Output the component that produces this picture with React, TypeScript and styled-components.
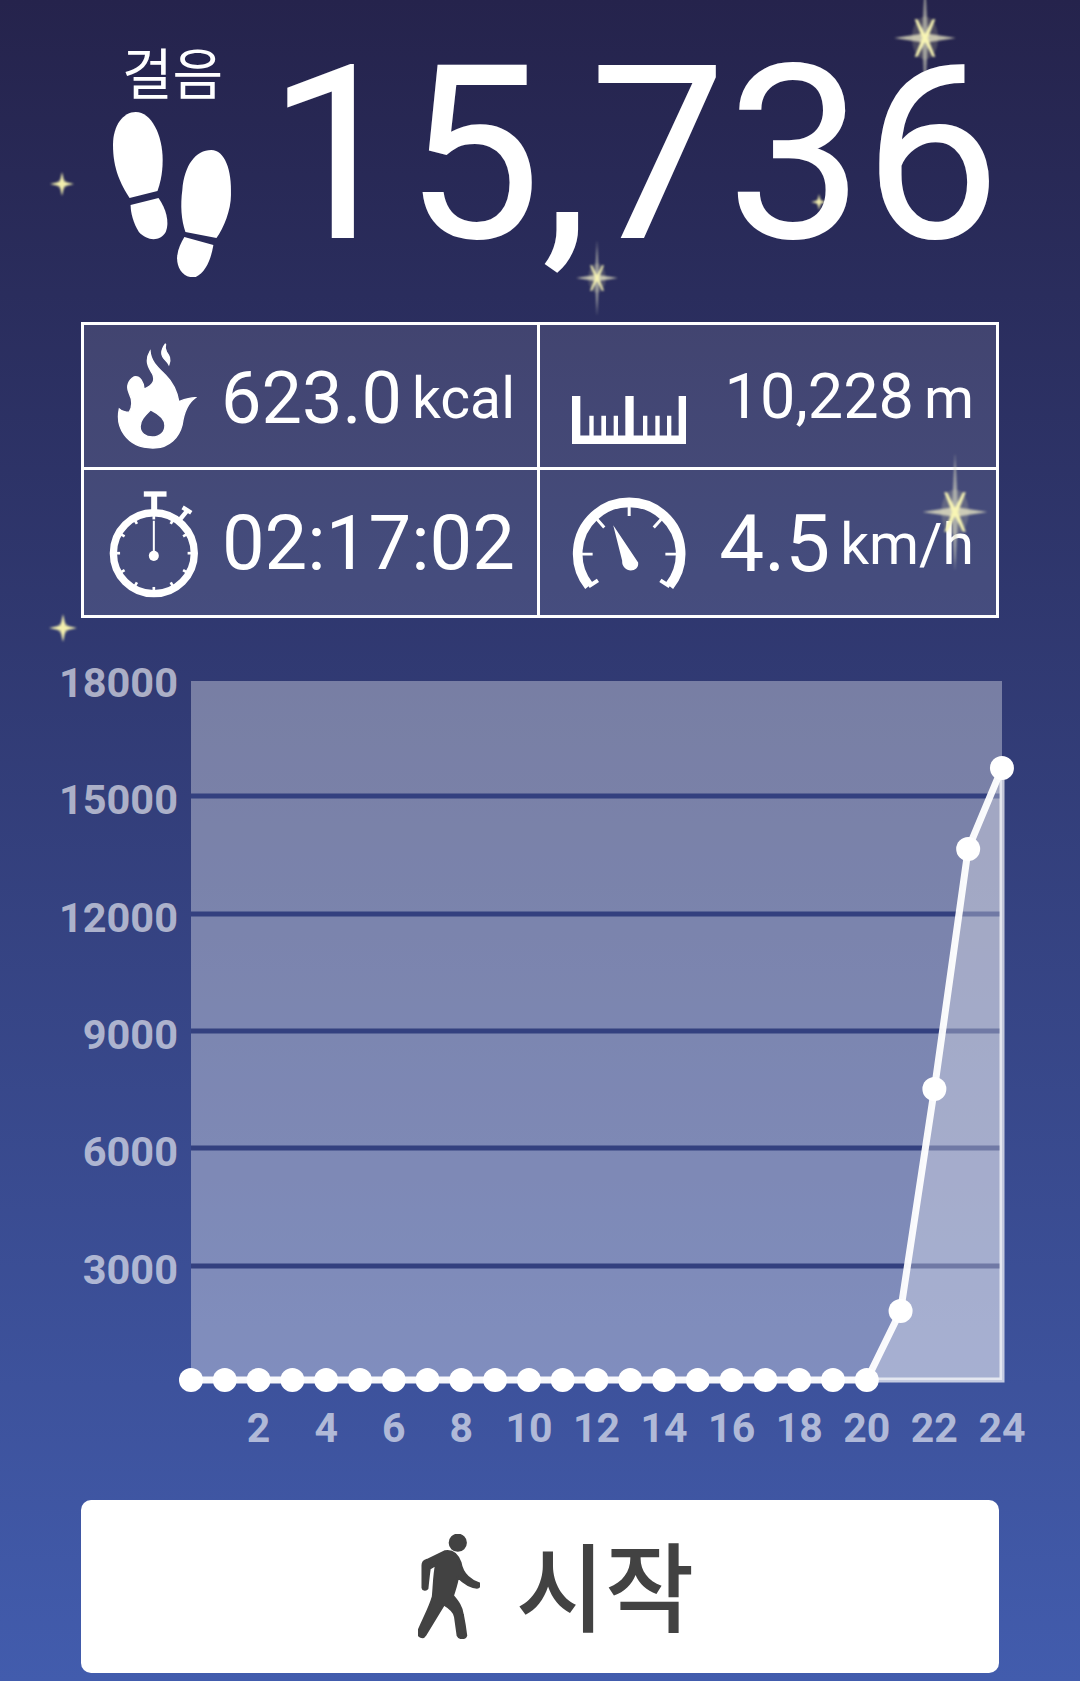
import React from 'react';
import styled, { createGlobalStyle } from 'styled-components';

const FONT = `Roboto, "Noto Sans CJK KR", sans-serif`;

const GlobalStyle = createGlobalStyle`
  html, body {
    margin: 0;
    padding: 0;
  }
  body {
    font-family: ${FONT};
    background: #25234c;
  }
`;

const HOURLY: [number, number][] = [
  [21, 1311],
  [22, 1089],
  [23, 849],
  [24, 768],
];

const hourX = (hour: number) => 191 + hour * 33.79;

const points: [number, number][] = [
  ...Array.from({ length: 21 }, (_, h): [number, number] => [hourX(h), 1380]),
  ...HOURLY.map(([h, y]): [number, number] => [hourX(h), y]),
];

const Y_TICKS = [
  { label: '18000', y: 679 },
  { label: '15000', y: 796 },
  { label: '12000', y: 914 },
  { label: '9000', y: 1031 },
  { label: '6000', y: 1148 },
  { label: '3000', y: 1266 },
];

const X_TICKS = Array.from({ length: 12 }, (_, i) => (i + 1) * 2);

const Sparkle = ({ x, y, size, front }: { x: number; y: number; size: number; front?: boolean }) => (
  <SparkleSvg $x={x} $y={y} $size={size} $front={front} viewBox="-60 -60 120 120">
    <ellipse rx="14" ry="23" fill="#f3f0b0" opacity="0.18" />
    <path d="M0 -60L3.4 0L0 60L-3.4 0Z" fill="#dcdcc4" opacity="0.6" />
    <path d="M-33 0L0 -5L33 0L0 5Z" fill="#f0eec8" opacity="0.75" />
    <path d="M-11 -20L-8 -20L0 -4L8 -20L11 -20L3 0L11 20L8 20L0 4L-8 20L-11 20L-3 0Z" fill="#f8f5b4" />
  </SparkleSvg>
);

const Twinkle = ({ x, y, size }: { x: number; y: number; size: number }) => (
  <SparkleSvg $x={x} $y={y} $size={size} viewBox="-10 -10 20 20">
    <circle r="4" fill="#f4f0ae" opacity="0.4" />
    <path d="M0 -10L1.8 -1.8L10 0L1.8 1.8L0 10L-1.8 1.8L-10 0L-1.8 -1.8Z" fill="#f4f0ae" />
  </SparkleSvg>
);

const FeetIcon = () => (
  <svg width="119" height="165" viewBox="110 112 115 165" preserveAspectRatio="none" fill="#fff">
    <path d="M132 112C147 112 158 135 158 160C158 175 155 185 153 191L126 198C118 185 110 170 110 145C110 125 120 112 132 112Z" />
    <path d="M127 205L154 198C161 208 165 222 161 232C155 242 143 241 135 232C130 224 127 213 127 205Z" />
    <path d="M205 150C218 150 225 170 224 195C224 210 217 228 210 238L180 232C176 220 175 205 177 190C179 165 190 150 205 150Z" />
    <path d="M179 237L207 245C205 258 200 272 190 277C178 279 171 268 172 256C173 248 176 242 179 237Z" />
  </svg>
);

const FlameIcon = () => (
  <svg width="80" height="110" viewBox="48 8 242 330" fill="#fff" stroke="#fff" strokeWidth="4" fillRule="evenodd">
    <path d="M148 38C132 65 142 85 155 105C165 125 158 140 130 152C128 130 118 112 100 115C82 125 75 145 85 165C95 185 95 205 85 222C75 222 62 218 55 212C50 235 52 265 70 290C90 318 125 332 165 330C205 328 235 300 245 260C250 225 260 195 285 178C265 178 248 185 235 190C230 160 215 130 195 110C175 90 150 70 148 38ZM150 215C135 230 118 245 118 265C118 285 135 297 155 297C178 297 193 282 193 262C193 240 170 225 150 215Z" />
    <path d="M195 15C180 35 178 50 195 65C200 70 203 74 205 78C212 60 205 50 198 40C192 30 193 22 195 15Z" />
  </svg>
);

const StopwatchIcon = () => {
  const ticks = Array.from({ length: 12 }, (_, i) => i * 30);
  return (
    <DroppedSvg $drop={4} width="92" height="107" viewBox="115 543 275 320" fill="none" stroke="#fff">
      <circle cx="252" cy="729" r="121" strokeWidth="22" />
      <path d="M222 552H290" strokeWidth="16" />
      <path d="M253 552V605" strokeWidth="18" />
      <path d="M327 632L352 602M338 592L364 608" strokeWidth="13" />
      {ticks.map((deg) => (
        <path key={deg} d="M252 610V628" strokeWidth="8" transform={`rotate(${deg} 252 729)`} />
      ))}
      <path d="M252 632V737" strokeWidth="6" />
      <circle cx="252" cy="737" r="15" fill="#fff" stroke="none" />
    </DroppedSvg>
  );
};

const RulerIcon = () => (
  <DroppedSvg $drop={48} width="114" height="48" viewBox="20 32 342 146" preserveAspectRatio="none" fill="#fff">
    <path d="M20 32H45V152H72V92H85V152H108V92H122V152H145V92H158V152H180V32H205V152H233V92H246V152H270V92H283V152H305V92H318V152H340V32H362V178H20Z" />
  </DroppedSvg>
);

const GaugeIcon = () => (
  <svg width="114" height="92" viewBox="125 563 343 277" fill="none" stroke="#fff">
    <path d="M176 831A155 155 0 1 1 418 831" strokeWidth="29" />
    <path d="M419 832L391 814M175 832L203 814" strokeWidth="12" />
    <path d="M297 585V620M195 624L222 655M399 624L371 655M150 735H187M444 735H406" strokeWidth="9" />
    <path d="M249 648L324 760C327 780 306 788 292 782C280 776 275 766 276 755Z" fill="#fff" stroke="none" />
  </svg>
);

const WalkerIcon = () => (
  <svg width="62" height="105" viewBox="30 26 187 316" fill="#424242" stroke="#424242" strokeWidth="7" strokeLinejoin="round">
    <circle cx="150" cy="52" r="24" />
    <path d="M112 78C130 75 148 85 158 112C160 125 165 140 180 155C190 165 205 172 215 175C218 180 215 187 208 187C185 185 165 170 150 155C148 175 140 195 135 212C150 230 162 245 165 270C170 295 173 315 175 332C172 342 155 342 150 332L142 275C138 255 120 245 108 238L52 330C45 342 30 335 30 322C45 285 65 250 75 215C78 190 78 150 85 118L65 130C62 150 60 170 58 190C55 195 45 195 44 188L44 120C44 112 50 106 58 104Z" />
  </svg>
);

const Chart = () => {
  const line = points.map(([x, y]) => `${x},${y}`).join(' ');
  const area = `${hourX(20)},1380 ${HOURLY.map(([h, y]) => `${hourX(h)},${y}`).join(' ')} ${hourX(24)},1380`;
  return (
    <ChartSvg width="1080" height="840" viewBox="0 660 1080 840">
      <rect x="191" y="681" width="811" height="699" fill="#fff" opacity="0.35" />
      {Y_TICKS.slice(1).map(({ y }) => (
        <rect key={y} x="191" y={y - 2.5} width="809" height="5" fill="#33407f" />
      ))}
      <polygon points={area} fill="#fff" opacity="0.3" />
      <path d={`M${hourX(20)} 1380H1002V768`} fill="none" stroke="#fff" strokeOpacity="0.7" strokeWidth="5" />
      <polyline points={line} fill="none" stroke="#fff" strokeOpacity="0.95" strokeWidth="7" />
      {points.map(([x, y]) => (
        <circle key={x} cx={x} cy={y} r="12" fill="#fff" />
      ))}
      {Y_TICKS.map(({ label, y }) => (
        <AxisText key={label} $size={41.5} x="178" y={y + 18} textAnchor="end">
          {label}
        </AxisText>
      ))}
      {X_TICKS.map((h) => (
        <AxisText key={h} $size={41} x={hourX(h)} y="1442" textAnchor="middle">
          {h}
        </AxisText>
      ))}
    </ChartSvg>
  );
};

const App = () => (
  <Page>
    <GlobalStyle />
    <Twinkle x={62} y={184} size={24} />
    <Twinkle x={63} y={628} size={28} />
    <Twinkle x={819} y={202} size={16} />
    <Sparkle x={925} y={38} size={112} />
    <Sparkle x={597} y={278} size={76} />
    <Header>
      <StepsColumn>
        <StepsLabel>걸음</StepsLabel>
        <FeetIcon />
      </StepsColumn>
      <StepCount>15,736</StepCount>
    </Header>
    <StatsGrid>
      <StatCell $pad={33}>
        <FlameIcon />
        <Reading $drop={6}>
          <Value $size={72}>623.0</Value>
          <Unit $lift={5}>kcal</Unit>
        </Reading>
      </StatCell>
      <StatCell $pad={32}>
        <RulerIcon />
        <Reading>
          <Value $size={63}>10,228</Value>
          <Unit>m</Unit>
        </Reading>
      </StatCell>
      <StatCell $pad={24}>
        <StopwatchIcon />
        <Reading>
          <Value $size={76}>02:17:02</Value>
        </Reading>
      </StatCell>
      <StatCell $pad={32}>
        <GaugeIcon />
        <Reading $drop={2}>
          <Value $size={80}>4.5</Value>
          <Unit $lift={7}>km/h</Unit>
        </Reading>
      </StatCell>
    </StatsGrid>
    <Chart />
    <StartButton type="button">
      <WalkerIcon />
      <StartLabel>시작</StartLabel>
    </StartButton>
    <Sparkle x={955} y={512} size={118} front />
  </Page>
);

const Page = styled.div`
  position: relative;
  width: 1080px;
  height: 1681px;
  overflow: hidden;
  background: linear-gradient(180deg, #25234c 0%, #425cad 100%);
`;

const SparkleSvg = styled.svg<{ $x: number; $y: number; $size: number; $front?: boolean }>`
  position: absolute;
  left: ${(p) => p.$x - p.$size / 2}px;
  top: ${(p) => p.$y - p.$size / 2}px;
  width: ${(p) => p.$size}px;
  height: ${(p) => p.$size}px;
  filter: blur(0.9px);
  z-index: ${(p) => (p.$front ? 2 : 0)};
`;

const Header = styled.header`
  position: relative;
  z-index: 1;
  display: flex;
  height: 322px;
  box-sizing: border-box;
  padding-left: 113px;
`;

const StepsColumn = styled.div`
  display: flex;
  flex-direction: column;
  align-items: center;
  width: 119px;
  padding-top: 41px;
`;

const StepsLabel = styled.div`
  color: #fff;
  font-size: 55px;
  line-height: 68px;
  height: 71px;
`;

const StepCount = styled.div`
  color: #fff;
  font-size: 244px;
  line-height: 290px;
  margin: 10px 0 0 35px;
  white-space: nowrap;
`;

const StatsGrid = styled.section`
  position: relative;
  z-index: 1;
  display: grid;
  grid-template-columns: 456px 456px;
  grid-template-rows: 145px 145px;
  width: 912px;
  margin-left: 81px;
  border: 3px solid #fff;
`;

const StatCell = styled.div<{ $pad: number }>`
  display: flex;
  align-items: center;
  justify-content: space-between;
  box-sizing: border-box;
  padding: 0 22px 0 ${(p) => p.$pad}px;
  background: rgba(255, 255, 255, 0.11);
  border-color: #fff;
  border-style: solid;
  border-width: 0;
  &:nth-child(odd) {
    border-right-width: 3px;
  }
  &:nth-child(-n + 2) {
    border-bottom-width: 3px;
  }
`;

const DroppedSvg = styled.svg<{ $drop: number }>`
  margin-top: ${(p) => p.$drop}px;
`;

const Reading = styled.div<{ $drop?: number }>`
  display: flex;
  align-items: baseline;
  gap: 10px;
  margin-top: ${(p) => p.$drop ?? 0}px;
  color: #fff;
  white-space: nowrap;
`;

const Value = styled.span<{ $size: number }>`
  font-size: ${(p) => p.$size}px;
  line-height: 1;
`;

const Unit = styled.span<{ $lift?: number }>`
  font-size: 57px;
  line-height: 1;
  transform: translateY(${(p) => -(p.$lift ?? 0)}px);
`;

const ChartSvg = styled.svg`
  position: relative;
  z-index: 1;
  display: block;
  margin-top: 42px;
  overflow: visible;
`;

const AxisText = styled.text<{ $size: number }>`
  font-family: ${FONT};
  font-size: ${(p) => p.$size}px;
  font-weight: 700;
  fill: #fff;
  fill-opacity: 0.6;
`;

const StartButton = styled.button`
  position: relative;
  z-index: 1;
  display: flex;
  align-items: center;
  justify-content: center;
  gap: 36px;
  width: 918px;
  height: 173px;
  margin-left: 81px;
  padding: 0 0 0 32px;
  border: none;
  border-radius: 10px;
  background: #fff;
  font-family: ${FONT};
`;

const StartLabel = styled.span`
  color: #424242;
  font-size: 97px;
  font-weight: 500;
  line-height: 1;
  margin-top: 10px;
`;

export default App;
